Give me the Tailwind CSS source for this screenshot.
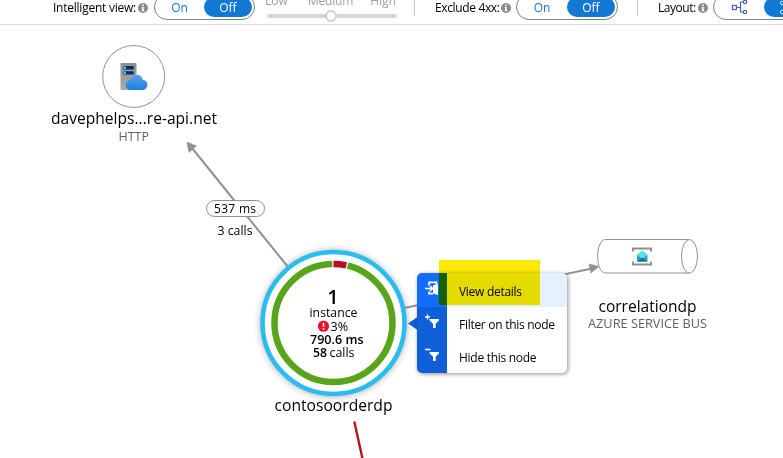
<!DOCTYPE html>
<html lang="en">
<head>
<meta charset="utf-8">
<title>Application map</title>
<script src="https://cdn.jsdelivr.net/npm/@tailwindcss/browser@4"></script>
</head>
<body class="w-[783px] h-[458px] overflow-hidden bg-white text-black font-['Open_Sans','Noto_Sans',sans-serif]">
<svg class="hidden">
  <symbol id="info" viewBox="0 0 10 10"><circle cx="5" cy="5" r="5" fill="#8c8c8c"/><path d="M5 4v4" stroke="#fff" stroke-width="1.600" fill="none"/><path d="M3.800 4.400H5M3.700 7.700h2.700" stroke="#fff" stroke-width=".8"/><rect x="4.200" y="1.500" width="1.600" height="1.500" fill="#fff"/></symbol>
</svg>
<main class="flex flex-col w-[783px] h-[458px]">
  <header class="flex h-[25px] shrink-0 overflow-hidden border-b border-[#dcdcdc] pl-[53px] text-[12px] leading-[16px]">
    <div class="flex shrink-0 w-[101px]">
      <span class="w-[84px] whitespace-nowrap tracking-[-0.24px]">Intelligent view:</span>
      <svg class="mt-[3px] ml-px size-[10px]"><use href="#info"/></svg>
    </div>
    <div class="flex shrink-0 w-[101px] h-[26px] -mt-[6px] p-[2px] rounded-full border border-[#808080]">
      <span class="w-[47px] pt-[3px] pr-[2px] text-center text-[#1479d2]">On</span>
      <span class="w-[48px] h-[20px] pt-[3px] rounded-full bg-[#1179d4] text-center text-white">Off</span>
    </div>
    <div class="shrink-0 w-[130px] ml-[12px]">
      <div class="flex justify-between -mt-[7px] pr-px -ml-[2px] text-[#97a3a3]"><span>Low</span><span class="ml-[3px] tracking-[-0.2px]">Medium</span><span>High</span></div>
      <svg class="block mt-px w-[130px] h-[14px]" viewBox="0 0 130 14"><path d="M2 6h126" stroke="#d6d6d6" stroke-width="4" stroke-linecap="round"/><circle cx="64" cy="6" r="5" fill="#fff" stroke="#cfcfcf" stroke-width="1.8"/></svg>
    </div>
    <div class="shrink-0 w-px h-[16px] ml-[17px] bg-[#c8c8c8]"></div>
    <div class="flex shrink-0 w-[81px] ml-[20px]">
      <span class="w-[65px] whitespace-nowrap tracking-[-0.36px]">Exclude 4xx:</span>
      <svg class="mt-[3px] ml-px size-[10px]"><use href="#info"/></svg>
    </div>
    <div class="flex shrink-0 w-[102px] h-[26px] -mt-[6px] p-[2px] rounded-full border border-[#808080]">
      <span class="w-[48px] pt-[3px] pr-[2px] text-center text-[#1479d2]">On</span>
      <span class="w-[48px] h-[20px] pt-[3px] rounded-full bg-[#1179d4] text-center text-white">Off</span>
    </div>
    <div class="shrink-0 w-px h-[16px] ml-[19px] bg-[#c8c8c8]"></div>
    <div class="flex shrink-0 w-[55px] ml-[20px]">
      <span class="w-[39px] whitespace-nowrap tracking-[-0.45px]">Layout:</span>
      <svg class="mt-[3px] ml-px size-[10px]"><use href="#info"/></svg>
    </div>
    <div class="flex shrink-0 w-[102px] h-[26px] -mt-[6px] p-[2px] rounded-full border border-[#808080]">
      <span class="w-[48px] pt-px pl-[15px]"><svg width="18" height="18" viewBox="0 0 18 18" fill="none" stroke="#4164b5" stroke-width="1.200"><rect x="1.5" y="7.5" width="4" height="4"/><path d="M6 9.5h3.500M12 4H9.500v10H12"/><circle cx="14" cy="4" r="1.700"/><circle cx="14" cy="14" r="1.700"/></svg></span>
      <span class="w-[48px] h-[20px] pl-[14px] rounded-full bg-[#1179d4]"><svg width="18" height="18" viewBox="0 0 18 18" fill="none" stroke="#d5e8fa"><circle cx="4" cy="6" r="1.700"/><circle cx="4" cy="15" r="1.700"/><path d="M6 6h5v9H6"/></svg></span>
    </div>
  </header>

  <section class="relative h-[433px]">
    <svg class="block w-[783px] h-[433px]" viewBox="0 25 783 433" font-size="13">
      <defs>
        <linearGradient id="cloud" x2="0" y2="1"><stop stop-color="#5c9ff0"/><stop offset="1" stop-color="#1a80dd"/></linearGradient>
        <linearGradient id="server" x2="0" y2="1"><stop stop-color="#8e8e8e"/><stop offset="1" stop-color="#a8a8a8"/></linearGradient>
        <filter id="glow" x="-20%" y="-20%" width="140%" height="140%"><feGaussianBlur stdDeviation="3.5"/></filter>
      </defs>
      <!-- edges -->
      <g stroke="#919191" stroke-width="2" fill="#919191">
        <path d="M288 267L192 148"/><path d="M187 142l9.500 4-7.500 6.500z" stroke-width=".6"/>
        <path d="M402 308.500L592 268.500"/><path d="M599 266.500l-10-2.500 1.800 9z" stroke-width=".6"/>
      </g>
      <path d="M354.300 421.500L363 461" stroke="#ba141a" stroke-width="2.400"/>
      <rect x="206.500" y="200.500" width="58" height="16" rx="8" fill="#fff" stroke="#919191"/>
      <text x="214" y="213" font-size="12" textLength="42">537 ms</text>
      <text x="217.500" y="235" font-size="12" textLength="35" lengthAdjust="spacingAndGlyphs">3 calls</text>

      <!-- http node -->
      <circle cx="133.700" cy="76.500" r="31" fill="#fff" stroke="#919191"/>
      <rect x="120.500" y="63" width="16" height="27" rx="1" fill="url(#server)"/>
      <rect x="123" y="66" width="11" height="3.400" rx="1.500" fill="#06305f"/><rect x="123" y="71.200" width="11" height="3.400" rx="1.500" fill="#06305f"/>
      <circle cx="124.800" cy="67.700" r="1.300" fill="#43d5f5"/><circle cx="124.800" cy="72.900" r="1.300" fill="#43d5f5"/>
      <path d="M131 90c-3 0-5.300-2.200-5.300-5 0-2.700 2-4.900 4.700-5 .7-3.200 3-5.200 6.300-5.200 3.100 0 5.300 2 6.100 4.900 2.600.2 4.500 2.300 4.500 5 0 2.900-2.200 5.300-5 5.300z" fill="url(#cloud)"/>
      <text x="51" y="124" font-size="16" textLength="166" lengthAdjust="spacingAndGlyphs">davephelps...re-api.net</text>
      <text x="118.500" y="141" font-size="12" fill="#606060" textLength="30.500" lengthAdjust="spacingAndGlyphs">HTTP</text>

      <!-- service bus node -->
      <path d="M605.500 239.500H689.500V273H605.500C595 273 595 239.500 605.500 239.500z" fill="#fff" stroke="#919191"/>
      <ellipse cx="689.500" cy="256.300" rx="8" ry="16.800" fill="#fff" stroke="#919191"/>
      <path d="M633 251.500V248.500H651V251.500M633 261.500V264.500H651V261.500" fill="none" stroke="#8f8f8f" stroke-width="2"/>
      <path d="M637 255l5.300-4.200 5.200 4.200v6.500H637z" fill="#2c9fcb"/><path d="M637 255l5.300-4.200 5.200 4.200-5.200 3.700z" fill="#55e3fb"/><path d="M637 261.500l5.300-3.700 5.200 3.700z" fill="#136f9d"/>
      <text x="598.500" y="312" font-size="16" textLength="98" lengthAdjust="spacingAndGlyphs">correlationdp</text>
      <text x="588" y="328" font-size="12" fill="#606060" textLength="119" lengthAdjust="spacingAndGlyphs">AZURE SERVICE BUS</text>

      <!-- selected application node -->
      <circle cx="333.500" cy="323.500" r="73" fill="#777" opacity=".65" filter="url(#glow)"/>
      <circle cx="333.500" cy="323" r="71" fill="#fff" stroke="#27bdf1" stroke-width="4.500"/>
      <circle cx="333.500" cy="323" r="59" fill="none" stroke="#58a51c" stroke-width="6.500"/>
      <path d="M332.300 264A59 59 0 0 1 347.600 265.700" fill="none" stroke="#fff" stroke-width="7.500"/>
      <path d="M333.500 264A59 59 0 0 1 346.300 265.400" fill="none" stroke="#ba0f22" stroke-width="6.500"/>
      <text x="333" y="304" font-size="20" font-weight="600" text-anchor="middle">1</text>
      <text x="309.500" y="317" textLength="48" lengthAdjust="spacingAndGlyphs">instance</text>
      <circle cx="323.500" cy="326.200" r="5.600" fill="#e8112d"/><path d="M323.500 322.800v4" stroke="#fff" stroke-width="1.600"/><circle cx="323.500" cy="329" r=".9" fill="#fff"/>
      <text x="330.500" y="331" font-size="12" textLength="17.500" lengthAdjust="spacingAndGlyphs">3%</text>
      <text x="310" y="344" font-size="12" font-weight="600" textLength="53.500" lengthAdjust="spacingAndGlyphs">790.6 ms</text>
      <text x="313" y="357" font-size="12" font-weight="600" textLength="14" lengthAdjust="spacingAndGlyphs">58</text>
      <text x="329.500" y="357" font-size="12" textLength="25" lengthAdjust="spacingAndGlyphs">calls</text>
      <text x="274.500" y="411" font-size="16" textLength="118" lengthAdjust="spacingAndGlyphs">contosoorderdp</text>
      <path d="M408 323.500L417.500 317V330z" fill="#0f5fd9"/>
    </svg>

    <!-- node context menu -->
    <div class="absolute left-[417px] top-[248px] flex flex-col w-[150px] h-[100px] overflow-hidden rounded-[5px] bg-white text-[12px] shadow-[1px_1px_4px_rgba(0,0,0,0.45)]">
      <div class="flex h-[34px] bg-[#e4f1fe]">
        <span class="flex w-[30px] bg-[#136cff] pl-[7px] pt-[8px]"><svg width="16" height="16" viewBox="0 0 16 16" fill="none" stroke="#fff" stroke-width="1.700"><path d="M5 4.500V1.300H12.500V5M5 10.500V12.700H9M1 7.500H7.500M6 5l2.500 2.500L6 10"/><path d="M9 4.500l5-1.500v11l-5-1.500z" fill="#fff" stroke="none"/></svg></span>
        <span class="pl-[12px] pt-[10px] leading-[18px] whitespace-nowrap tracking-[-0.28px]">View details</span>
      </div>
      <div class="flex h-[33px]">
        <span class="flex w-[30px] bg-[#0f5fd9] pl-[7px] pt-[7px]"><svg width="16" height="16" viewBox="0 0 16 16"><path d="M5.500 5H15v1.200l-3.300 3.500V14H9V9.700L5.500 6.200z" fill="#fff"/><path d="M1 3h5M3.500.5v5" stroke="#fff" stroke-width="1.300"/></svg></span>
        <span class="pl-[12px] pt-[9px] leading-[18px] whitespace-nowrap tracking-[-0.28px]">Filter on this node</span>
      </div>
      <div class="flex h-[33px]">
        <span class="flex w-[30px] bg-[#0f5fd9] pl-[7px] pt-[7px]"><svg width="16" height="16" viewBox="0 0 16 16"><path d="M5.500 5H15v1.200l-3.300 3.500V14H9V9.700L5.500 6.200z" fill="#fff"/><path d="M1 2.500h5.500" stroke="#fff" stroke-width="1.300"/></svg></span>
        <span class="pl-[12px] pt-[9px] leading-[18px] whitespace-nowrap tracking-[-0.28px]">Hide this node</span>
      </div>
    </div>
    <!-- highlighter mark -->
    <div class="absolute left-[439px] top-[235px] w-[101px] h-[45px] bg-[#ffe800] mix-blend-multiply"></div>
  </section>
</main>
</body>
</html>
